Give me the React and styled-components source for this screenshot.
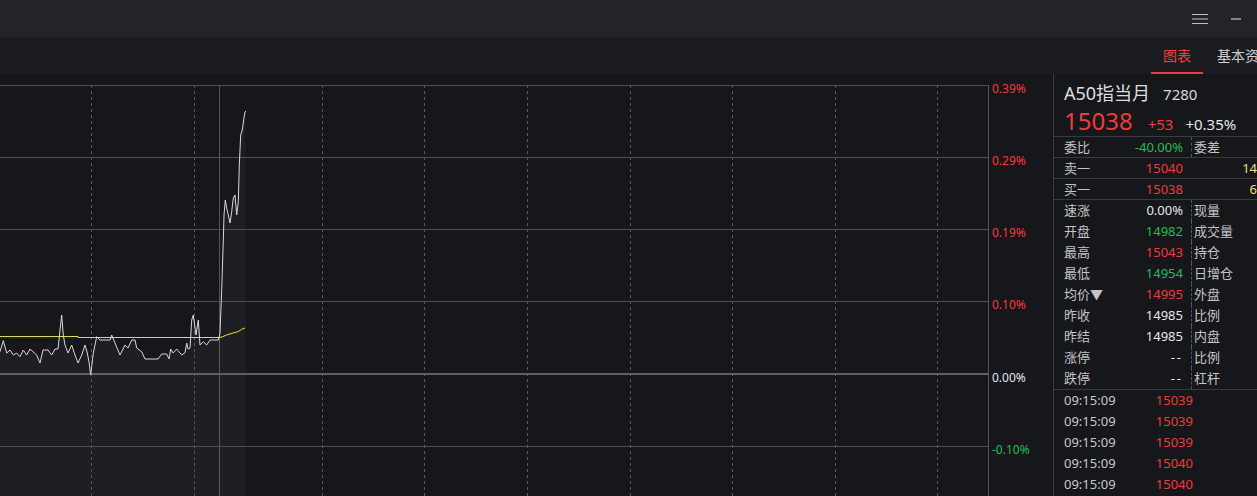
import React from "react";
import styled, { createGlobalStyle } from "styled-components";

const GlobalStyle = createGlobalStyle`
  html, body {
    margin: 0;
    padding: 0;
    background: #16171b;
  }
  body {
    font-family: "Noto Sans", "Noto Sans CJK SC", sans-serif;
    overflow: hidden;
  }
`;

const RED = "#f03a3a";
const GREEN = "#1fbf4f";
const WHITE = "#e6e6e6";
const YELLOW = "#e4e27c";
const LABEL = "#c4c4c4";
const LINE = "#3a3b3f";

const Page = styled.div`
  width: 1257px;
  height: 496px;
  display: flex;
  flex-direction: column;
  overflow: hidden;
  background: #16171b;
`;

const TopBar = styled.div`
  height: 37px;
  flex: none;
  background: #222429;
  display: flex;
  justify-content: flex-end;
  align-items: center;
  padding-right: 3px;
`;

const WinButton = styled.button`
  width: 36px;
  height: 37px;
  padding: 0;
  border: 0;
  background: transparent;
  display: flex;
  align-items: center;
  justify-content: center;
  color: #c2c2c2;
`;

const TabBar = styled.div`
  height: 37px;
  flex: none;
  background: #1b1c20;
  display: grid;
  grid-template-columns: 1fr 106px;
  overflow: hidden;
`;

const Tabs = styled.div`
  grid-column: 2;
  display: flex;
  white-space: nowrap;
`;

const Tab = styled.div`
  height: 37px;
  box-sizing: border-box;
  padding: 1px ${(p) => (p.$active ? 12 : 14)}px 0;
  display: flex;
  align-items: center;
  font-size: 14px;
  color: ${(p) => (p.$active ? "#ee4040" : "#cfcfcf")};
  border-bottom: 2px solid ${(p) => (p.$active ? "#ee4040" : "transparent")};
`;

const Main = styled.div`
  flex: 1;
  min-height: 0;
  display: flex;
`;

const ChartPane = styled.div`
  flex: 1;
  overflow: hidden;
  svg {
    display: block;
  }
`;

const SidePanel = styled.div`
  width: 203px;
  flex: none;
  border-left: 1px solid ${LINE};
  overflow: hidden;
  font-size: 13px;
  color: ${LABEL};
`;

const Header = styled.div`
  height: 63px;
  box-sizing: border-box;
  padding: 6px 0 0 10px;
  border-bottom: 1px solid ${LINE};
`;

const TitleRow = styled.div`
  display: flex;
  align-items: baseline;
  height: 26px;
  line-height: 26px;
  white-space: nowrap;
`;

const Title = styled.span`
  font-size: 18px;
  color: #dedede;
`;

const Code = styled.span`
  font-size: 15px;
  color: #d8d8d8;
  margin-left: 13px;
`;

const PriceRow = styled.div`
  display: flex;
  align-items: baseline;
  height: 30px;
  line-height: 30px;
  white-space: nowrap;
`;

const BigPrice = styled.span`
  font-size: 24px;
  color: ${RED};
`;

const Change = styled.span`
  font-size: 15px;
  color: ${(p) => p.$color};
  margin-left: ${(p) => p.$gap}px;
`;

const Group = styled.div`
  border-bottom: 1px solid ${LINE};
`;

const Row = styled.div`
  height: ${(p) => (p.$ruled ? 20 : 21)}px;
  line-height: ${(p) => (p.$ruled ? 20 : 21)}px;
  display: grid;
  grid-template-columns: 127px 66px;
  padding-left: 10px;
  white-space: nowrap;
  border-bottom: ${(p) => (p.$ruled ? `1px solid ${LINE}` : "0")};
`;

const LeftCell = styled.div`
  display: flex;
  justify-content: space-between;
  padding-right: 8px;
`;

const RightCell = styled.div`
  display: flex;
  justify-content: ${(p) => (p.$vol ? "flex-end" : "flex-start")};
  border-left: 1px dashed ${(p) => (p.$divider ? "#55565a" : "transparent")};
  padding-left: 2px;
`;

const Value = styled.span`
  color: ${(p) => p.$color || WHITE};
  letter-spacing: ${(p) => (p.$wide ? "2px" : "0")};
`;

const TickRow = styled.div`
  height: 21px;
  line-height: 21px;
  display: grid;
  grid-template-columns: 81px 48px;
  padding-left: 10px;
  white-space: nowrap;
`;

const TickTime = styled.span`
  color: #c8c8c8;
`;

const TickPrice = styled.span`
  text-align: right;
  color: ${RED};
`;

const price = [
  [0, 351.7], [3.3, 340.7], [6.7, 353], [10, 350], [13.3, 355], [16.7, 353], [20, 356.7],
  [23.3, 350], [26.7, 355], [30, 349], [33, 351.7], [36.7, 355], [40, 363], [43, 350],
  [48, 350], [51.7, 355], [55, 349], [58, 349], [60, 330], [61.7, 315], [63.3, 335],
  [65, 345], [68, 353], [71.7, 345], [75, 355], [78, 363], [81.7, 355], [85, 345],
  [87.3, 353], [89, 362], [90.7, 375], [93.3, 353], [96.7, 336.7], [100, 340], [110, 340],
  [111.7, 335], [115, 343], [120, 355], [125, 345], [128, 348], [131.7, 340], [135, 340],
  [136.7, 348], [141.7, 351.7], [145, 359], [158, 359], [161.7, 354], [166.7, 354],
  [169, 359], [170.7, 349], [173, 353], [176.7, 349], [181.7, 355], [185, 352.7],
  [186.7, 343], [188, 349], [190, 348], [191.7, 320], [193.3, 315], [196, 335],
  [198.3, 320], [200, 345], [203.3, 341.7], [206.7, 345], [210, 340], [218.3, 340],
  [220, 333], [221.7, 290], [223.3, 240], [224, 215], [225.3, 200], [226.7, 208],
  [228.3, 215], [230, 223], [231.7, 211.7], [233.3, 198], [235, 195], [236.7, 215],
  [238.3, 201.7], [239.3, 165], [240.7, 135], [242.3, 130], [243.7, 120], [244.7, 113],
  [245.7, 111],
];

const average = [
  [0, 336.5], [78, 336.5], [78, 337.5], [219, 337.5], [222, 337], [226.7, 335],
  [233, 333], [238, 331.7], [241.7, 329.3], [245, 328],
];

const TOP = 74;
const toPts = (arr) => arr.map(([x, y]) => `${x},${(y - TOP).toFixed(1)}`).join(" ");

const levels = [
  { y: 11, label: "0.39%", color: RED },
  { y: 83, label: "0.29%", color: RED },
  { y: 155, label: "0.19%", color: RED },
  { y: 227, label: "0.10%", color: RED },
  { y: 300, label: "0.00%", color: "#e0e4ee", zero: true },
  { y: 372, label: "-0.10%", color: GREEN },
];

const dashedX = [91.5, 194.5, 322.5, 424.5, 527.5, 630.5, 732.5, 835.5, 937.5];

function Chart() {
  const last = price[price.length - 1];
  const area = `${toPts(price)} ${last[0]},422 0,422`;
  return (
    <svg width="1053" height="422" viewBox="0 0 1053 422">
      <polygon points={area} fill="#1e1f23" />
      {dashedX.map((x) => (
        <line key={x} x1={x} y1="11" x2={x} y2="422" stroke="#55565a" strokeDasharray="3 3" />
      ))}
      <line x1="219.5" y1="11" x2="219.5" y2="422" stroke="#55565a" />
      {levels.map((l) => (
        <line
          key={l.label}
          x1="0"
          x2="988"
          y1={l.zero ? l.y : l.y + 0.5}
          y2={l.zero ? l.y : l.y + 0.5}
          stroke={l.zero ? "#5e5f63" : "#4c4d51"}
          strokeWidth={l.zero ? 2 : 1}
        />
      ))}
      <line x1="988.5" y1="11" x2="988.5" y2="422" stroke="#55565a" />
      {levels.map((l) => (
        <text
          key={l.label + "t"}
          x="992"
          y={l.y + 8}
          fill={l.color}
          fontSize="12"
          fontFamily='"Noto Sans", sans-serif'
        >
          {l.label}
        </text>
      ))}
      <polyline points={toPts(average)} fill="none" stroke="#e6e400" strokeWidth="1" />
      <polyline points={toPts(price)} fill="none" stroke="#d8d8d8" strokeWidth="1" />
    </svg>
  );
}

const stats = [
  ["速涨", "0.00%", WHITE, "现量"],
  ["开盘", "14982", GREEN, "成交量"],
  ["最高", "15043", RED, "持仓"],
  ["最低", "14954", GREEN, "日增仓"],
  ["均价▼", "14995", RED, "外盘"],
  ["昨收", "14985", WHITE, "比例"],
  ["昨结", "14985", WHITE, "内盘"],
  ["涨停", "--", WHITE, "比例"],
  ["跌停", "--", WHITE, "杠杆"],
];

const ticks = ["15039", "15039", "15039", "15040", "15040"];

export default function App() {
  return (
    <>
      <GlobalStyle />
      <Page>
        <TopBar>
          <WinButton aria-label="menu">
            <svg width="16" height="12" viewBox="0 0 16 12">
              <path d="M0 1.5H16M0 6H16M0 10.5H16" stroke="currentColor" strokeWidth="1.2" />
            </svg>
          </WinButton>
          <WinButton aria-label="minimize">
            <svg width="10" height="2" viewBox="0 0 10 2">
              <path d="M0 1H10" stroke="currentColor" strokeWidth="1.2" />
            </svg>
          </WinButton>
        </TopBar>
        <TabBar>
          <Tabs>
            <Tab $active>图表</Tab>
            <Tab>基本资料</Tab>
          </Tabs>
        </TabBar>
        <Main>
          <ChartPane>
            <Chart />
          </ChartPane>
          <SidePanel>
            <Header>
              <TitleRow>
                <Title>A50指当月</Title>
                <Code>7280</Code>
              </TitleRow>
              <PriceRow>
                <BigPrice>15038</BigPrice>
                <Change $color={RED} $gap={15}>+53</Change>
                <Change $color={WHITE} $gap={12}>+0.35%</Change>
              </PriceRow>
            </Header>
            <Row $ruled>
              <LeftCell>
                <span>委比</span>
                <Value $color={GREEN}>-40.00%</Value>
              </LeftCell>
              <RightCell $divider>委差</RightCell>
            </Row>
            <Row $ruled>
              <LeftCell>
                <span>卖一</span>
                <Value $color={RED}>15040</Value>
              </LeftCell>
              <RightCell $vol>
                <Value $color={YELLOW}>14</Value>
              </RightCell>
            </Row>
            <Row $ruled>
              <LeftCell>
                <span>买一</span>
                <Value $color={RED}>15038</Value>
              </LeftCell>
              <RightCell $vol>
                <Value $color={YELLOW}>6</Value>
              </RightCell>
            </Row>
            <Group>
              {stats.map(([label, value, color, right]) => (
                <Row key={label + right}>
                  <LeftCell>
                    <span>{label}</span>
                    <Value $color={color} $wide={value === "--"}>{value}</Value>
                  </LeftCell>
                  <RightCell $divider>{right}</RightCell>
                </Row>
              ))}
            </Group>
            {ticks.map((p, i) => (
              <TickRow key={i}>
                <TickTime>09:15:09</TickTime>
                <TickPrice>{p}</TickPrice>
              </TickRow>
            ))}
          </SidePanel>
        </Main>
      </Page>
    </>
  );
}
